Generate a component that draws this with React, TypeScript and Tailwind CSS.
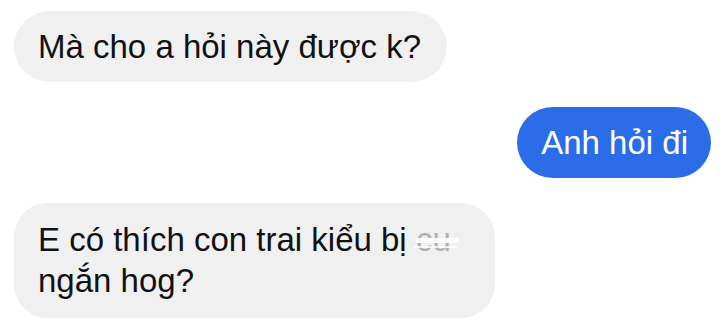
export default function App() {
  return (
    <div className="flex h-[325px] w-[728px] flex-col overflow-hidden bg-white pl-[14px] pr-[17px] pt-[11px] font-['Liberation_Sans',Arial,sans-serif] text-[33px] leading-[41px] text-[#111]">
      <div className="self-start rounded-full bg-[#f0f0f0] py-[15px] pl-[24px] pr-[26px]">
        Mà cho a hỏi này được k?
      </div>

      <div className="mt-[25px] self-end rounded-full bg-[#2b6de8] py-[15px] pl-[24px] pr-[23px] text-white">
        Anh hỏi đi
      </div>

      <div className="mt-[25px] h-[115px] w-[481px] self-start whitespace-nowrap rounded-[34px] bg-[#f0f0f0] py-[16px] pl-[24px] pr-[20px]">
        E có thích con trai kiểu bị{' '}
        <span className="relative inline-block text-[#b0b0b0]">
          cu
          <span className="absolute left-0 right-[-8px] top-[19px] h-[5px] bg-white/90" />
          <span className="absolute left-[-2px] right-[-6px] top-[27px] h-[2px] bg-white/80" />
        </span>
        <br />
        ngắn hog?
      </div>
    </div>
  );
}
